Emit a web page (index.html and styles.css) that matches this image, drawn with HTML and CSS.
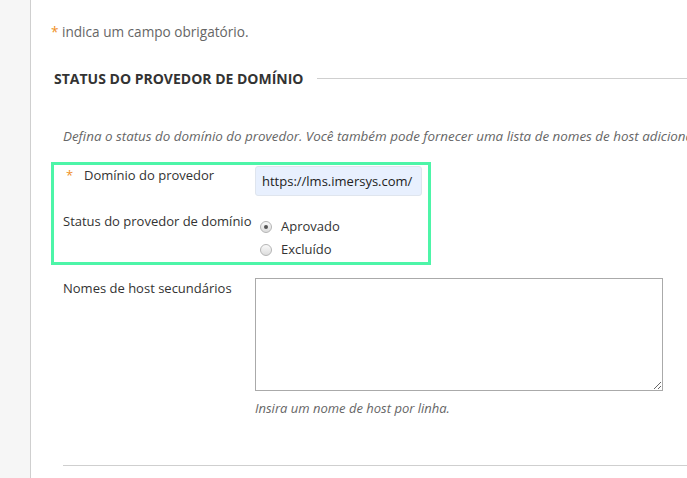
FILE: index.html
```html
<!DOCTYPE html>
<html lang="pt">
<head>
<meta charset="utf-8">
<title>Status do provedor de domínio</title>
<link rel="stylesheet" href="styles.css">
</head>
<body>
<div class="page">
  <aside class="rail"></aside>
  <main class="content">
    <p class="req-note"><span class="star">*</span> indica um campo obrigatório.</p>
    <div class="section-head">
      <h2>STATUS DO PROVEDOR DE DOMÍNIO</h2>
      <span class="rule"></span>
    </div>
    <p class="desc">Defina o status do domínio do provedor. Você também pode fornecer uma lista de nomes de host adicionais para este provedor.</p>
    <div class="highlight">
      <div class="row row-domain">
        <label class="label label-req" for="dom"><span class="star">*</span>Domínio do provedor</label>
        <div class="field"><input id="dom" class="text-input" type="text" value="https://lms.imersys.com/"></div>
      </div>
      <div class="row row-status">
        <span class="label">Status do provedor de domínio</span>
        <div class="field radios">
          <label class="radio"><span class="dot checked"></span>Aprovado</label>
          <label class="radio"><span class="dot"></span>Excluído</label>
        </div>
      </div>
    </div>
    <div class="row row-hosts">
      <label class="label" for="hosts">Nomes de host secundários</label>
      <div class="field">
        <div class="textarea-wrap">
          <textarea id="hosts" class="textarea"></textarea>
        </div>
        <p class="hint">Insira um nome de host por linha.</p>
      </div>
    </div>
    <div class="bottom-rule"></div>
  </main>
</div>
</body>
</html>
```

FILE: styles.css
```css
html, body {
  margin: 0;
  padding: 0;
  height: 100%;
  overflow: hidden;
  background: #fff;
}
body {
  font-family: "Open Sans", "Noto Sans", sans-serif;
  font-size: 13px;
  color: #333;
}
.page {
  display: flex;
  height: 478px;
}
.rail {
  width: 30px;
  flex: 0 0 30px;
  background: #f6f6f6;
  border-right: 1px solid #cfcfcf;
}
.content {
  flex: 1;
  min-width: 0;
  overflow: hidden;
}
.star {
  color: #f0901e;
}
.req-note {
  margin: 23px 0 0 20px;
  line-height: 18px;
  font-size: 13.6px;
  color: #666;
}
.section-head {
  display: flex;
  align-items: center;
  margin: 27px 0 0 23px;
  height: 20px;
}
.section-head h2 {
  margin: 0;
  font-size: 14px;
  font-weight: 700;
  color: #333;
  white-space: nowrap;
}
.rule {
  flex: 1;
  height: 1px;
  background: #cfcfcf;
  margin-left: 13px;
}
.desc {
  margin: 39px 0 0 32px;
  line-height: 18px;
  font-size: 13.4px;
  font-style: italic;
  color: #666;
  white-space: nowrap;
}
.highlight {
  margin: 17px 0 0 20px;
  width: 365px;
  border: 3px solid #4df5a8;
  padding: 1px 0 2px 9px;
}
.row {
  display: grid;
  grid-template-columns: 192px 1fr;
}
.label {
  line-height: 18px;
  color: #333;
}
.label-req {
  padding-top: 0;
}
.label-req .star {
  display: inline-block;
  width: 21px;
  padding-left: 3px;
  box-sizing: border-box;
}
.text-input {
  box-sizing: border-box;
  width: 167px;
  height: 30px;
  border: 1px solid #dfe5ee;
  border-radius: 3px;
  background: #e8f0fe;
  font-family: inherit;
  font-size: 13px;
  color: #222;
  padding: 0 6px;
}
.row-status {
  margin-top: 16px;
}
.radios {
  display: flex;
  flex-direction: column;
  padding-top: 2px;
}
.radio {
  display: flex;
  align-items: center;
  height: 23px;
  color: #333;
}
.dot {
  box-sizing: border-box;
  width: 12px;
  height: 12px;
  border-radius: 50%;
  border: 1px solid #b5b5b5;
  background: linear-gradient(#fafafa, #dcdcdc);
  margin: 2px 9px 0 5px;
  position: relative;
}
.dot.checked::after {
  content: "";
  position: absolute;
  left: 3px;
  top: 3px;
  width: 4px;
  height: 4px;
  border-radius: 50%;
  background: #555;
}
.row-hosts {
  margin: 13px 0 0 32px;
}
.row-hosts .label {
  padding-top: 1px;
}
.textarea-wrap {
  width: 408px;
  height: 113px;
}
.textarea {
  box-sizing: border-box;
  display: block;
  width: 408px;
  height: 113px;
  border: 1px solid #aaa;
  margin: 0;
  resize: both;
  font-family: inherit;
}
.hint {
  margin: 8px 0 0;
  line-height: 18px;
  font-style: italic;
  color: #666;
}
.bottom-rule {
  margin: 48px 0 0 32px;
  height: 1px;
  background: #cfcfcf;
}
```
